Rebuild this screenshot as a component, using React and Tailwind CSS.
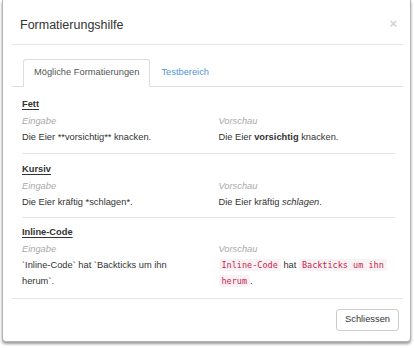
const sans = { fontFamily: '"Liberation Sans", Arial, sans-serif' };

function Code({ children }) {
  return (
    <code className="rounded-[2px] bg-[#f9f2f4] px-[3px] py-[1px] text-[8.5px] leading-[14px] text-[#c7254e] [font-family:'DejaVu_Sans_Mono',monospace] [box-decoration-break:clone]">
      {children}
    </code>
  );
}

function Section({ title, input, preview, className }) {
  return (
    <div className={className}>
      <div className="mb-[1px] font-bold leading-[16px] text-[#333] underline underline-offset-[1.5px]">{title}</div>
      <div className="grid grid-cols-2 gap-x-[20px]">
        <div>
          <div className="italic leading-[16px] text-[#aaa]">Eingabe</div>
          <div className="leading-[16px] text-[#333]">{input}</div>
        </div>
        <div>
          <div className="italic leading-[16px] text-[#aaa]">Vorschau</div>
          <div className="leading-[16px] text-[#333]">{preview}</div>
        </div>
      </div>
    </div>
  );
}

export default function App() {
  return (
    <div className="h-[348px] w-[414px] overflow-hidden bg-white pl-[2px] text-[9.3px]" style={sans}>
      <div className="w-[409px] rounded-b-[4px] border-x border-b border-[#b3b3b3] bg-white pl-[9px] pr-[7px] shadow-[0_2px_3px_rgba(0,0,0,0.4)]">
        {/* Header */}
        <div className="flex h-[45px] items-center justify-between border-b border-[#e5e5e5] pl-[8px] pr-[6px] pt-[6px]">
          <h4 className="text-[12.5px] text-[#333]">Formatierungshilfe</h4>
          <span className="-mt-[3px] text-[13px] font-bold text-[#d4d4d4]">×</span>
        </div>

        {/* Tabs */}
        <div className="pt-[14px]">
          <div className="flex border-b border-[#ddd] pl-[11px]">
            <div className="-mb-px flex h-[28px] items-center rounded-t-[3px] border border-b-white border-[#ddd] bg-white px-[10px] text-[#555]">
              Mögliche Formatierungen
            </div>
            <div className="-mb-px ml-[1px] flex h-[28px] items-center px-[10px] text-[#5296d5]">Testbereich</div>
          </div>
        </div>

        {/* Content */}
        <div className="pl-[10px] pr-[8px] pt-[9px]">
          <Section
            className="border-b border-[#e5e5e5] pb-[8px]"
            title="Fett"
            input="Die Eier **vorsichtig** knacken."
            preview={
              <>
                Die Eier <b>vorsichtig</b> knacken.
              </>
            }
          />
          <Section
            className="border-b border-[#e5e5e5] pb-[7px] pt-[7px]"
            title="Kursiv"
            input="Die Eier kräftig *schlagen*."
            preview={
              <>
                Die Eier kräftig <i>schlagen</i>.
              </>
            }
          />
          <Section
            className="pb-[9px] pt-[6px]"
            title="Inline-Code"
            input="`Inline-Code` hat `Backticks um ihn herum`."
            preview={
              <>
                <Code>Inline-Code</Code> hat <Code>Backticks um ihn herum</Code>.
              </>
            }
          />
        </div>

        {/* Footer */}
        <div className="flex justify-end border-t border-[#e5e5e5] py-[10px] pr-[4px]">
          <button className="h-[22px] rounded-[3px] border border-[#ccc] bg-white px-[8px] text-[#333]">Schliessen</button>
        </div>
      </div>
    </div>
  );
}
